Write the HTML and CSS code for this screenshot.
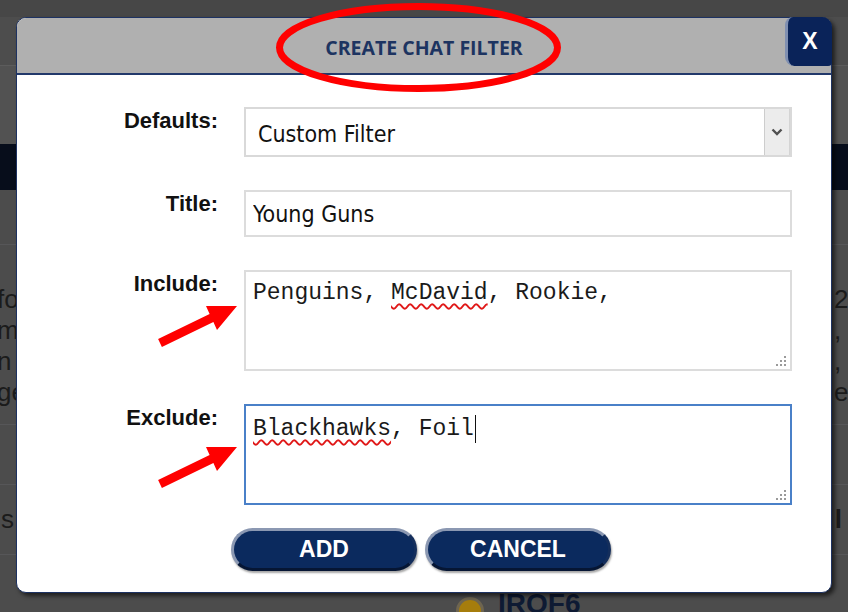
FILE: index.html
```html
<!DOCTYPE html>
<html lang="en">
<head>
    <meta charset="UTF-8">
    <meta name="viewport" content="width=device-width, initial-scale=1.0">
    <title>Create Chat Filter</title>
    <link rel="stylesheet" href="styles.css">
</head>
<body>

    <div class="page">
        <div class="page-top"></div>
        <div class="page-bar"></div>
        <div class="page-subbar"></div>
        <div class="page-nav"></div>
        <div class="page-row page-row-empty"></div>
        <div class="page-row page-row-text">
            <div class="bg-col bg-col-left">
                <span>fo</span><span>m</span><span>n</span><span>ge</span>
            </div>
            <div class="bg-col bg-col-right">
                <span>2</span><span>,</span><span>,</span><span>e</span>
            </div>
        </div>
        <div class="page-row page-row-mid"></div>
        <div class="page-row page-row-s">
            <span class="bg-s">s</span>
            <span class="bg-l">l</span>
        </div>
        <div class="page-row page-row-last">
            <span class="bg-dot"></span>
            <span class="bg-code">IROF6</span>
        </div>
    </div>

    <div class="modal">
        <div class="modal-header">
            <h1 class="modal-title">CREATE CHAT FILTER</h1>
        </div>
        <button class="close-btn">X</button>

        <div class="modal-body">
            <div class="form">
                <label class="form-label">Defaults:</label>
                <div class="select">
                    <span class="select-value">Custom Filter</span>
                    <span class="select-arrow">
                        <svg width="12" height="8" viewBox="0 0 12 8"><path d="M1.5 1.5 L6 6 L10.5 1.5" fill="none" stroke="#505050" stroke-width="2.4"/></svg>
                    </span>
                </div>

                <label class="form-label">Title:</label>
                <input class="field" type="text" value="Young Guns">

                <label class="form-label">Include:</label>
                <div class="area">Penguins, <span class="typo">McDavid</span>, Rookie,
                    <span class="grip"><svg width="12" height="12" viewBox="0 0 12 12" fill="#9a9a9a"><rect x="9" y="1" width="2" height="2"/><rect x="5" y="5" width="2" height="2"/><rect x="9" y="5" width="2" height="2"/><rect x="1" y="9" width="2" height="2"/><rect x="5" y="9" width="2" height="2"/><rect x="9" y="9" width="2" height="2"/></svg></span>
                </div>

                <label class="form-label">Exclude:</label>
                <div class="area area-focus"><span class="typo">Blackhawks</span>, Foil<span class="caret"></span>
                    <span class="grip"><svg width="12" height="12" viewBox="0 0 12 12" fill="#9a9a9a"><rect x="9" y="1" width="2" height="2"/><rect x="5" y="5" width="2" height="2"/><rect x="9" y="5" width="2" height="2"/><rect x="1" y="9" width="2" height="2"/><rect x="5" y="9" width="2" height="2"/><rect x="9" y="9" width="2" height="2"/></svg></span>
                </div>
            </div>

            <div class="actions">
                <button class="btn">ADD</button>
                <button class="btn">CANCEL</button>
            </div>
        </div>
    </div>

    <!-- red markup drawn over the screenshot -->
    <svg class="marks" width="848" height="612" viewBox="0 0 848 612">
        <ellipse cx="418.5" cy="47.5" rx="139" ry="41" fill="none" stroke="#ff0000" stroke-width="7"/>
        <g id="arrow">
            <polygon fill="#ff0000" points="158.1,338.9 209.6,313.9 206,306 237,306 217,330 213.4,322.1 161.9,347.1"/>
        </g>
        <use href="#arrow" transform="translate(0,141)"/>
    </svg>

</body>
</html>
```

FILE: styles.css
```css
body {
    margin: 0;
    width: 848px;
    height: 612px;
    overflow: hidden;
    font-family: "Liberation Sans", Arial, sans-serif;
    background-color: #4c4c4c;
    position: relative;
}
.page {
    display: flex;
    flex-direction: column;
    height: 612px;
}
.page > div {
    flex-shrink: 0;
}
.page-top {
    height: 17px;
    background-color: #474747;
}
.page-bar {
    height: 48px;
    background-color: #4d4d4d;
}
.page-subbar {
    height: 78px;
    background-color: #525252;
    border-top: 1px solid #5c5c5c;
}
.page-nav {
    height: 46px;
    background-color: #070d1b;
}
.page-row {
    border-bottom: 1px solid #565658;
    display: flex;
    justify-content: space-between;
    color: #1b1b1b;
}
.page-row-empty {
    height: 54px;
}
.page-row-text {
    height: 140px;
    padding-top: 39px;
}
.page-row-mid {
    height: 59px;
}
.page-row-s {
    height: 69px;
    align-items: center;
    font-size: 26px;
}
.page-row-last {
    flex: 1;
    min-height: 0;
    overflow: hidden;
    border-bottom: none;
    justify-content: flex-start;
    align-items: flex-start;
}
.bg-col {
    display: flex;
    flex-direction: column;
    font-size: 26px;
    line-height: 31px;
}
.bg-col-left {
    margin-left: -3px;
}
.bg-col-right {
    width: 14px;
}
.bg-s {
    margin-left: 1px;
}
.bg-l {
    font-weight: bold;
    margin-right: 6px;
}
.bg-dot {
    flex-shrink: 0;
    width: 22px;
    height: 22px;
    border-radius: 50%;
    background-color: #a67d0c;
    border: 3px solid #6e6550;
    margin: 42px 0 0 456px;
}
.bg-code {
    flex-shrink: 0;
    font-size: 28px;
    font-weight: bold;
    line-height: 32px;
    color: #0e1a33;
    margin: 33px 0 0 14px;
}

.modal {
    position: absolute;
    left: 16px;
    top: 17px;
    width: 816px;
    height: 576px;
    box-sizing: border-box;
    background-color: #fff;
    border: 1px solid #1d3262;
    border-radius: 10px;
    box-shadow: 3px 3px 4px rgba(0, 0, 0, 0.6);
}
.modal-header {
    height: 55px;
    background-color: #b0b0b0;
    border-bottom: 2px solid #22396b;
    border-radius: 9px 9px 0 0;
    display: flex;
    align-items: center;
    justify-content: center;
}
.modal-title {
    margin: 3px 0 0;
    font-family: "Open Sans", sans-serif;
    font-size: 19.5px;
    font-weight: bold;
    color: #1d3461;
}
.close-btn {
    position: absolute;
    top: -1px;
    right: -1px;
    width: 47px;
    height: 49px;
    padding: 0;
    background-color: #0a2359;
    border: none;
    border-left: 3px solid #7f8fb1;
    border-radius: 8px 10px 4px 9px;
    color: #fff;
    font-family: "Liberation Sans", Arial, sans-serif;
    font-size: 23px;
    font-weight: bold;
}
.modal-body {
    padding: 32px 0 0;
}
.form {
    display: grid;
    grid-template-columns: 201px 548px;
    column-gap: 26px;
    row-gap: 33px;
    align-items: start;
}
.form-label {
    text-align: right;
    font-size: 22px;
    font-weight: bold;
    line-height: 26px;
    padding-top: 1px;
    color: #111;
}
.select {
    height: 50px;
    box-sizing: border-box;
    border: 2px solid #d9d9d9;
    display: flex;
    align-items: center;
}
.select-value {
    flex: 1;
    padding: 3px 0 0 12px;
    font-family: "DejaVu Sans Condensed", "DejaVu Sans", sans-serif;
    font-stretch: condensed;
    font-size: 23px;
    color: #111;
}
.select-arrow {
    align-self: stretch;
    width: 24px;
    background-color: #ececec;
    border-left: 1px solid #cdcdcd;
    border-right: 1px solid #d4d4d4;
    display: flex;
    align-items: center;
    justify-content: center;
}
.field {
    height: 47px;
    box-sizing: border-box;
    margin: 0;
    border: 2px solid #dcdcdc;
    padding: 0 7px;
    font-family: "DejaVu Sans Condensed", "DejaVu Sans", sans-serif;
    font-stretch: condensed;
    font-size: 23px;
    color: #111;
    outline: none;
}
.area {
    position: relative;
    height: 101px;
    box-sizing: border-box;
    border: 2px solid #dcdcdc;
    padding: 8px 7px;
    font-family: "Liberation Mono", "Courier New", monospace;
    font-size: 23px;
    line-height: 26px;
    color: #1a1a1a;
    white-space: nowrap;
}
.area-focus {
    border-color: #4a80c8;
    padding-top: 9px;
}
.typo {
    text-decoration: underline wavy #e01818;
    text-decoration-thickness: 1.5px;
    text-underline-offset: 4px;
}
.caret {
    display: inline-block;
    width: 1px;
    height: 28px;
    background-color: #111;
    vertical-align: -8px;
    margin-left: 1px;
}
.grip {
    position: absolute;
    right: 3px;
    bottom: 2px;
    line-height: 0;
}
.actions {
    display: flex;
    gap: 8px;
    padding-left: 214px;
    margin-top: 23px;
}
.btn {
    width: 186px;
    height: 43px;
    box-sizing: border-box;
    padding: 0;
    background-color: #0b2a5e;
    border: 3px solid;
    border-color: #8b98b2 #142e5c #061634 #8b98b2;
    border-radius: 22px;
    box-shadow: 1px 2px 2px rgba(0, 0, 0, 0.35);
    color: #fff;
    font-family: "Liberation Sans", Arial, sans-serif;
    font-size: 23px;
    font-weight: bold;
}
.marks {
    position: absolute;
    left: 0;
    top: 0;
    pointer-events: none;
}
```
